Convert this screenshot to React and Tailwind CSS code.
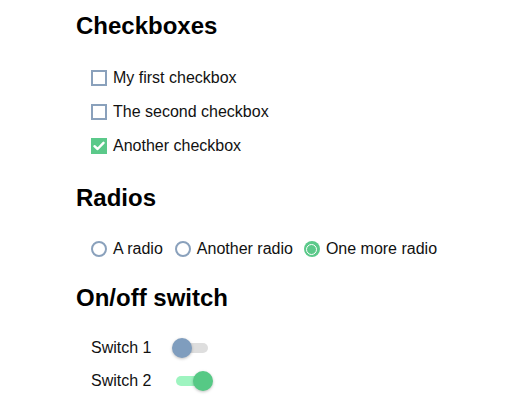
export default function App() {
  const font = { fontFamily: '"Liberation Sans", Arial, sans-serif' };
  const Check = ({ checked, label }) => (
    <div className="flex h-[34px] items-center">
      {checked ? (
        <span className="flex h-[16px] w-[16px] items-center justify-center bg-[#5bc98a]">
          <svg width="12" height="10" viewBox="0 0 12 10">
            <path d="M1.5 5.2 L4.6 8 L10.5 1.8" fill="none" stroke="#fff" strokeWidth="2.4" strokeLinecap="round" strokeLinejoin="round" />
          </svg>
        </span>
      ) : (
        <span className="block h-[16px] w-[16px] border-2 border-[#8aa1bc] bg-white" />
      )}
      <span className="ml-[6px] text-[16px] leading-[20px] text-[#111]">{label}</span>
    </div>
  );
  const Radio = ({ checked, label, className }) => (
    <div className={"flex items-center " + (className || "")}>
      {checked ? (
        <span className="relative block h-[16px] w-[16px] rounded-full bg-[#5bc98a]">
          <span className="absolute inset-[2.5px] rounded-full border border-white" />
        </span>
      ) : (
        <span className="block h-[16px] w-[16px] rounded-full border-2 border-[#8aa1bc] bg-white" />
      )}
      <span className="ml-[6px] text-[16px] leading-[20px] text-[#111]">{label}</span>
    </div>
  );
  const Switch = ({ on, label }) => (
    <div className="flex h-[33px] items-center">
      <span className="w-[85px] text-[16px] leading-[20px] text-[#111]">{label}</span>
      <span className={"relative block h-[10px] w-[32px] rounded-full " + (on ? "bg-[#9ef4c0]" : "bg-[#dedede]")}>
        <span
          className={
            "absolute top-[-5px] block h-[20px] w-[20px] rounded-full shadow-[0_1px_3px_rgba(0,0,0,0.25)] " +
            (on ? "right-[-5px] bg-[#56c985]" : "left-[-4px] bg-[#7f9dbe]")
          }
        />
      </span>
    </div>
  );
  return (
    <div className="min-h-[410px] w-[526px] bg-white pl-[76px] pt-[12px] text-black" style={font}>
      <h2 className="h-[28px] text-[24px] font-bold leading-[28px]">Checkboxes</h2>
      <div className="mt-[21px] pl-[15px]">
        <Check label="My first checkbox" />
        <Check label="The second checkbox" />
        <Check checked label="Another checkbox" />
      </div>
      <h2 className="mt-[21px] h-[28px] text-[24px] font-bold leading-[28px]">Radios</h2>
      <div className="mt-[20px] flex h-[34px] items-center pl-[15px]">
        <Radio label="A radio" />
        <Radio label="Another radio" className="ml-[12px]" />
        <Radio checked label="One more radio" className="ml-[11px]" />
      </div>
      <h2 className="mt-[18px] h-[28px] text-[24px] font-bold leading-[28px]">On/off switch</h2>
      <div className="mt-[19px] pl-[15px]">
        <Switch label="Switch 1" />
        <Switch on label="Switch 2" />
      </div>
    </div>
  );
}
